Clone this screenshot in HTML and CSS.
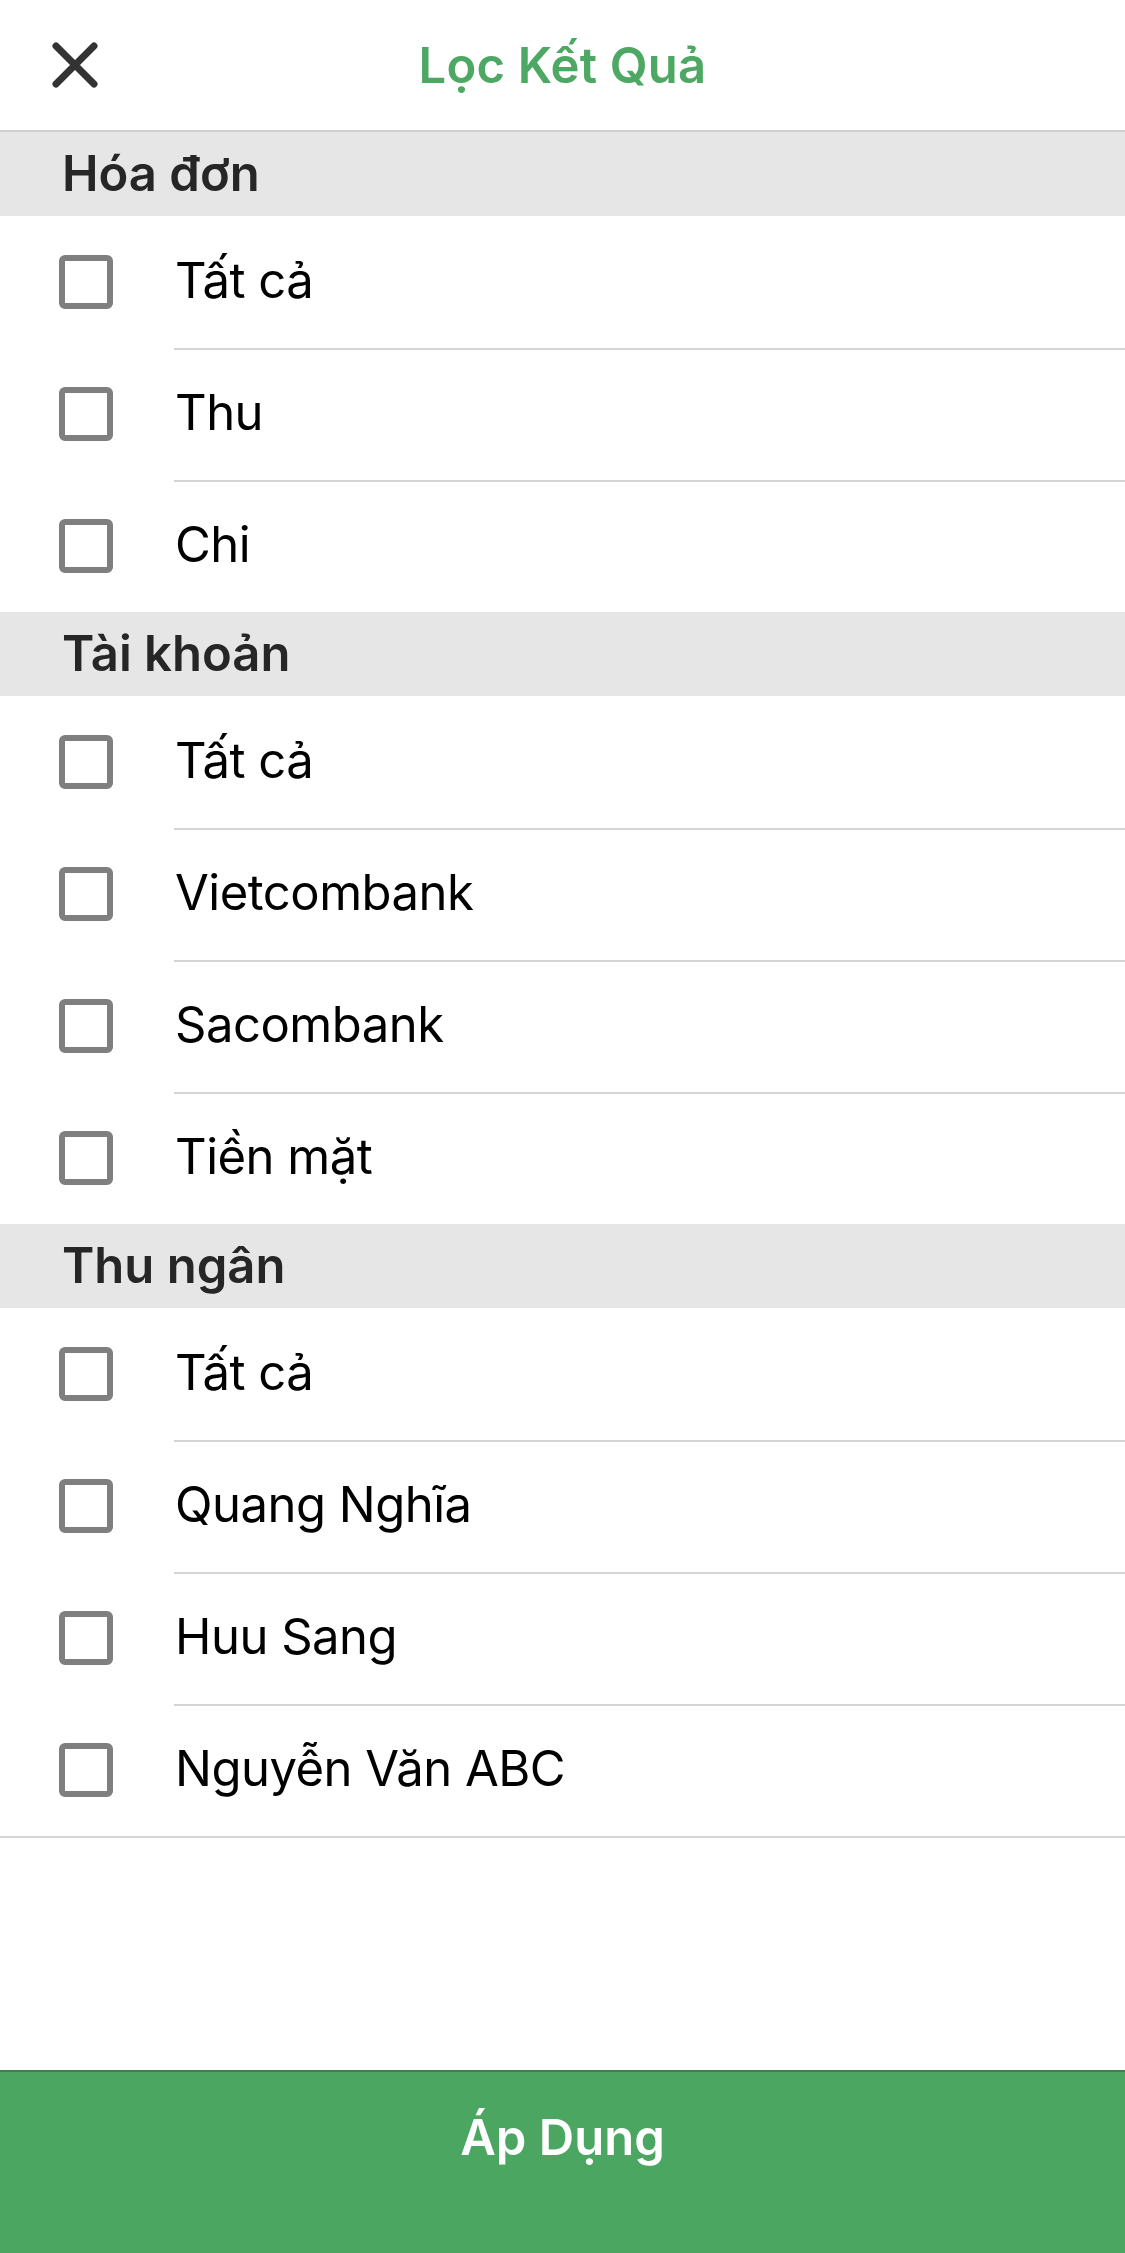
FILE: index.html
```html
<!DOCTYPE html>
<html lang="vi">
<head>
<meta charset="utf-8">
<title>Lọc Kết Quả</title>
<link rel="stylesheet" href="styles.css">
</head>
<body>
<div class="screen">
  <header class="topbar">
    <button class="close" aria-label="Đóng">
      <svg width="46" height="46" viewBox="0 0 46 46"><path d="M4 4 L42 42 M42 4 L4 42" stroke="#333" stroke-width="7" stroke-linecap="round" fill="none"/></svg>
    </button>
    <h1 class="title">Lọc Kết Quả</h1>
  </header>

  <main class="list">
    <section class="group">
      <h2 class="group-title">Hóa đơn</h2>
      <ul class="rows">
        <li class="row"><span class="box"></span><span class="label">Tất cả</span></li>
        <li class="row"><span class="box"></span><span class="label">Thu</span></li>
        <li class="row"><span class="box"></span><span class="label">Chi</span></li>
      </ul>
    </section>
    <section class="group">
      <h2 class="group-title">Tài khoản</h2>
      <ul class="rows">
        <li class="row"><span class="box"></span><span class="label">Tất cả</span></li>
        <li class="row"><span class="box"></span><span class="label">Vietcombank</span></li>
        <li class="row"><span class="box"></span><span class="label">Sacombank</span></li>
        <li class="row"><span class="box"></span><span class="label">Tiền mặt</span></li>
      </ul>
    </section>
    <section class="group last">
      <h2 class="group-title">Thu ngân</h2>
      <ul class="rows">
        <li class="row"><span class="box"></span><span class="label">Tất cả</span></li>
        <li class="row"><span class="box"></span><span class="label">Quang Nghĩa</span></li>
        <li class="row"><span class="box"></span><span class="label">Huu Sang</span></li>
        <li class="row"><span class="box"></span><span class="label">Nguyễn Văn ABC</span></li>
      </ul>
    </section>
  </main>

  <footer class="apply">
    <span class="apply-text">Áp Dụng</span>
  </footer>
</div>
</body>
</html>
```
FILE: styles.css
```css
* { box-sizing: border-box; }
html, body { margin: 0; padding: 0; background: #fff; }
body { font-family: Inter, "Noto Sans", "DejaVu Sans", sans-serif; }

.screen {
  width: 1125px;
  height: 2253px;
  display: flex;
  flex-direction: column;
  overflow: hidden;
}

.topbar {
  height: 132px;
  flex: none;
  display: flex;
  align-items: center;
  justify-content: center;
  position: relative;
  border-bottom: 2px solid #cfcfcf;
}
.close {
  position: absolute;
  left: 52px;
  top: 42px;
  width: 46px;
  height: 46px;
  padding: 0;
  border: 0;
  background: none;
  display: block;
}
.close svg { display: block; }
.title {
  margin: 0;
  font-size: 49px;
  font-weight: 600;
  color: #4ca863;
  letter-spacing: 0.2px;
}

.list { flex: 1; }
.group-title {
  margin: 0;
  height: 84px;
  background: #e6e6e6;
  display: flex;
  align-items: center;
  padding-left: 62px;
  padding-bottom: 2px;
  font-size: 49px;
  font-weight: 600;
  color: #262626;
}
.rows { list-style: none; margin: 0; padding: 0; }
.row {
  height: 132px;
  display: flex;
  align-items: center;
  position: relative;
}
.row + .row::before {
  content: "";
  position: absolute;
  left: 174px;
  right: 0;
  top: 0;
  height: 2px;
  background: #d4d4d4;
}
.group.last .rows { border-bottom: 2px solid #d4d4d4; }
.box {
  width: 54px;
  height: 54px;
  margin-left: 59px;
  border: 6px solid #7f7f7f;
  border-radius: 6px;
  flex: none;
}
.label {
  margin-left: 62px;
  padding-bottom: 4px;
  font-size: 49px;
  letter-spacing: -0.5px;
  color: #000;
}

.apply {
  height: 183px;
  flex: none;
  background: #4ba662;
  border-top: 2px solid #3f8050;
  display: flex;
  justify-content: center;
  padding-top: 36px;
}
.apply-text {
  font-size: 49px;
  font-weight: 600;
  color: #fff;
  line-height: 60px;
}
```
